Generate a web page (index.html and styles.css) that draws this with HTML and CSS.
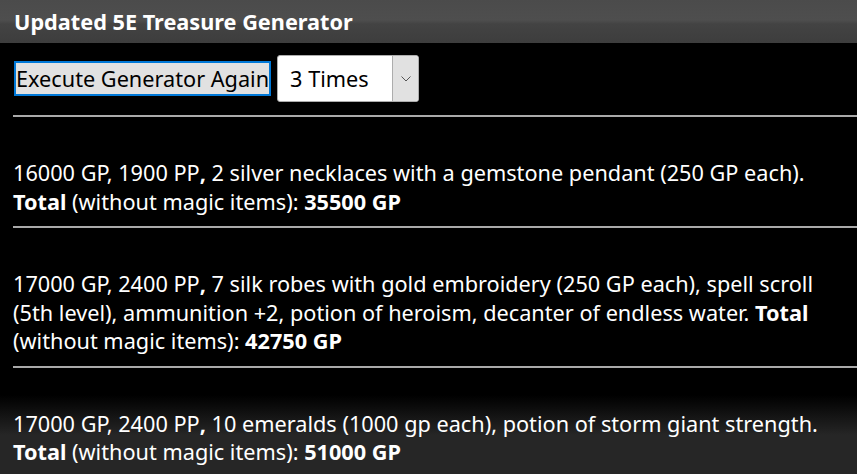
FILE: index.html
```html
<!DOCTYPE html>
<html>
<head>
<meta charset="utf-8">
<link rel="stylesheet" href="styles.css">
</head>
<body>
<div class="page">
  <header class="topbar"><h1 class="title">Updated 5E Treasure Generator</h1></header>
  <main class="content">
    <div class="controls">
      <button class="exec-btn">Execute Generator Again</button>
      <div class="select">
        <span class="select-value">3 Times</span>
        <span class="select-arrow"><svg width="10" height="6" viewBox="0 0 10 6"><path d="M0.5 0.5 L5 5 L9.5 0.5" fill="none" stroke="#555" stroke-width="1"/></svg></span>
      </div>
    </div>
    <hr class="rule">
    <p class="entry">16000 GP, 1900 PP<b>,</b> 2 silver necklaces with a gemstone pendant (250 GP each). <b>Total</b> (without magic items): <b>35500 GP</b></p>
    <hr class="rule">
    <p class="entry">17000 GP, 2400 PP<b>,</b> 7 silk robes with gold embroidery (250 GP each), spell scroll (5th level), ammunition +2, potion of heroism, decanter of endless water. <b>Total</b> (without magic items): <b>42750 GP</b></p>
    <hr class="rule">
    <p class="entry">17000 GP, 2400 PP<b>,</b> 10 emeralds (1000 gp each), potion of storm giant strength. <b>Total</b> (without magic items): <b>51000 GP</b></p>
  </main>
</div>
</body>
</html>
```
FILE: styles.css
```css
html, body { margin: 0; padding: 0; }
body {
  background: #000;
  color: #fff;
  font-family: "Noto Sans", "Open Sans", sans-serif;
  overflow: hidden;
}
.page {
  min-height: 474px;
  background: linear-gradient(to bottom, #000 0, #000 395px, #262626 435px, #262626 100%);
}
.topbar {
  height: 43px;
  background: linear-gradient(to bottom, #4b4b4b 0, #4e4e4e 20px, #434343 24px, #3d3d3d 43px);
  display: flex;
  align-items: center;
  padding-left: 14px;
}
.title {
  margin: 0;
  font-size: 21.7px;
  font-weight: 700;
  color: #fff;
}
.content {
  padding-left: 13px;
}
.controls {
  display: flex;
  align-items: center;
  gap: 6px;
  padding-top: 12px;
  padding-bottom: 13px;
  padding-left: 1px;
}
.exec-btn {
  font-family: inherit;
  font-size: 21.7px;
  line-height: 1;
  color: #000;
  background: #e1e1e1;
  border: 2px solid #0078d7;
  height: 35px;
  padding: 0;
  margin: 0;
  white-space: nowrap;
}
.select {
  display: flex;
  width: 142px;
  height: 47px;
  box-sizing: border-box;
  border: 1px solid #adadad;
  border-radius: 3px;
  background: #fff;
  overflow: hidden;
}
.select-value {
  flex: 1;
  display: flex;
  align-items: center;
  padding-left: 12px;
  color: #000;
  font-size: 21.7px;
}
.select-arrow {
  width: 25px;
  background: #e1e1e1;
  border-left: 1px solid #adadad;
  display: flex;
  align-items: center;
  justify-content: center;
}
.rule {
  margin: 0;
  border: 0;
  height: 2px;
  background: #a9a9a9;
}
.entry {
  margin: 42px 0 10px 0;
  padding-right: 12px;
  font-size: 21.7px;
  line-height: 28.5px;
}
.entry b { font-weight: 700; }
```
